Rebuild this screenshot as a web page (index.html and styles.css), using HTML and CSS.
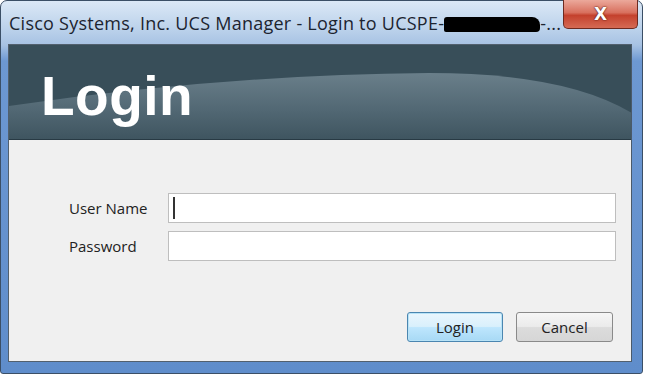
FILE: index.html
```html
<!DOCTYPE html>
<html>
<head>
<meta charset="utf-8">
<title>UCS Manager - Login</title>
<link rel="stylesheet" href="styles.css">
</head>
<body>

<div class="window">
    <div class="titlebar">
        <span class="title">Cisco Systems, Inc. UCS Manager - Login to UCSPE-<span class="redact"></span>-...</span>
        <button class="close" type="button">X</button>
    </div>

    <div class="client">
        <div class="banner">
            <svg class="swoosh" width="626" height="94" viewBox="0 0 626 94">
                <defs>
                    <linearGradient id="swooshFill" x1="0" y1="0" x2="0" y2="1">
                        <stop offset="0" stop-color="#6a7f8a"/>
                        <stop offset="0.55" stop-color="#526874"/>
                        <stop offset="1" stop-color="#3f5560"/>
                    </linearGradient>
                </defs>
                <path d="M0 61 Q 210 30 420 28 Q 560 28 626 70 L626 94 L0 94 Z" fill="url(#swooshFill)"/>
            </svg>
            <h1>Login</h1>
        </div>

        <form class="login-form">
            <label for="user">User Name</label>
            <div class="field">
                <input id="user" type="text">
                <span class="caret"></span>
            </div>
            <label for="pass">Password</label>
            <div class="field">
                <input id="pass" type="password">
            </div>
        </form>

        <div class="actions">
            <button class="btn btn-default" type="button">Login</button>
            <button class="btn" type="button">Cancel</button>
        </div>
    </div>
</div>

</body>
</html>
```

FILE: styles.css
```css
body {
    margin: 0;
    background: #fff;
    font-family: "Open Sans", "Noto Sans", sans-serif;
}

div.window {
    width: 643px;
    height: 374px;
    box-sizing: border-box;
    padding: 0 10px 11px 7px;
    display: flex;
    flex-direction: column;
    border: 1px solid #3b4f66;
    border-radius: 7px 7px 3px 3px;
    background: linear-gradient(180deg, #dbe8f6 0px, #b9d0ea 30px, #a7c2e3 44px, #6d98d2 60px, #5f8dcb 100%);
}

div.titlebar {
    height: 43px;
    display: flex;
    align-items: center;
    position: relative;
}

span.title {
    font-size: 18px;
    letter-spacing: 0.25px;
    color: #1c2430;
    margin-left: 1px;
    margin-top: 1px;
    white-space: nowrap;
}

span.redact {
    display: inline-block;
    width: 96px;
    height: 15px;
    background: #000;
    vertical-align: -2px;
    border-radius: 3px 8px 4px 2px;
}

button.close {
    position: absolute;
    right: -6px;
    top: -1px;
    width: 75px;
    height: 29px;
    border: 1px solid #6d2a20;
    border-top: none;
    border-radius: 0 0 5px 5px;
    background: linear-gradient(180deg, #eba99b 0%, #d8705e 45%, #c4412d 55%, #d56a54 100%);
    color: #fff;
    font: bold 17px "DejaVu Sans", sans-serif;
    text-shadow: 0 0 2px #5a1a12, 0 0 1px #5a1a12;
    padding: 0;
}

div.client {
    flex: 1;
    display: flex;
    flex-direction: column;
    background: #f0f0f0;
    border: 1px solid #52606e;
    border-right-color: #4b5a6a;
}

div.banner {
    height: 94px;
    position: relative;
    background: #384e59;
    border-bottom: 1px solid #283a44;
    overflow: hidden;
}

svg.swoosh {
    position: absolute;
    left: 0;
    top: 0;
}

div.banner h1 {
    position: relative;
    margin: 0;
    padding: 24px 0 0 32px;
    font: bold 55px/1 "Liberation Sans", Arial, sans-serif;
    color: #fff;
    letter-spacing: 0.5px;
}

form.login-form {
    display: grid;
    grid-template-columns: 99px 448px;
    row-gap: 8px;
    align-items: center;
    padding: 53px 0 0 60px;
}

form.login-form label {
    font-size: 15px;
    color: #222;
}

div.field {
    position: relative;
    height: 30px;
}

div.field input {
    width: 100%;
    height: 30px;
    box-sizing: border-box;
    border: 1px solid #bebebe;
    border-radius: 0;
    background: #fff;
    outline: none;
    padding: 0 4px;
    font-size: 15px;
}

span.caret {
    position: absolute;
    left: 5px;
    top: 4px;
    width: 2px;
    height: 22px;
    background: #333;
}

div.actions {
    display: flex;
    justify-content: flex-end;
    gap: 13px;
    padding: 51px 18px 0 0;
}

button.btn {
    width: 97px;
    height: 30px;
    border: 1px solid #8a8a8a;
    border-radius: 3px;
    background: linear-gradient(180deg, #f6f6f6 0%, #ebebeb 48%, #dcdcdc 52%, #d6d6d6 100%);
    font-family: "Open Sans", "Noto Sans", sans-serif;
    font-size: 15px;
    color: #222;
    padding: 0;
}

button.btn-default {
    width: 96px;
    border-color: #4b86b0;
    box-shadow: inset 0 0 0 1px #b8e3f7;
    background: linear-gradient(180deg, #eaf6fd 0%, #d9f0fc 48%, #bee6fd 52%, #a7d9f5 100%);
}
```
